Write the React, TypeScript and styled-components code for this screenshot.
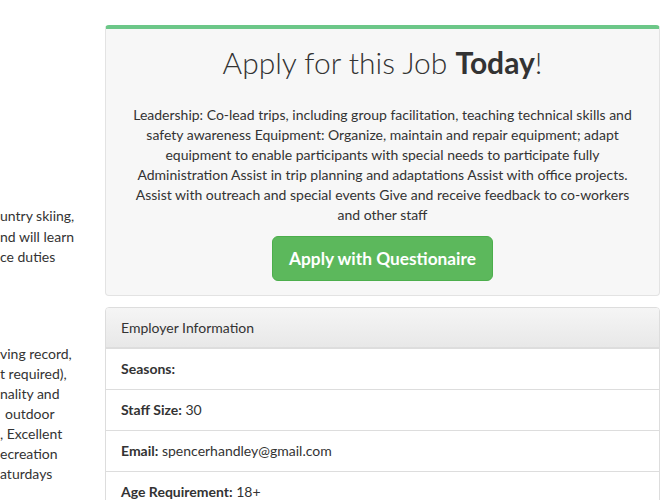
import React from "react";
import styled, { createGlobalStyle } from "styled-components";

const Global = createGlobalStyle`
  html, body { margin: 0; padding: 0; background: #fff; }
  body { font-family: Lato, "Open Sans", sans-serif; color: #333; font-size: 14px; line-height: 20px; }
`;

const Page = styled.div`
  display: flex;
  align-items: flex-start;
  width: 661px;
  height: 500px;
  overflow: hidden;
`;

const SideColumn = styled.div`
  width: 75px;
  flex: none;
  margin-right: 30px;
  overflow: hidden;
  padding-top: 206px;
`;

const SideBlock = styled.div<{ $gap?: number; $line?: number }>`
  margin-top: ${(p) => p.$gap ?? 0}px;
  display: flex;
  flex-direction: column;
  line-height: ${(p) => p.$line ?? 20}px;
`;

const SideLine = styled.div<{ $indent?: number }>`
  white-space: nowrap;
  padding-left: ${(p) => p.$indent ?? 0}px;
`;

const MainColumn = styled.div`
  width: 555px;
  flex: none;
  padding-top: 25px;
  display: flex;
  flex-direction: column;
  gap: 11px;
`;

const ApplyPanel = styled.section`
  background: #f7f7f7;
  border: 1px solid #e3e3e3;
  border-top: 4px solid #6cc788;
  border-radius: 4px;
  padding: 11px 19px 14px;
  text-align: center;
`;

const Title = styled.h1`
  margin: 0;
  font-size: 30px;
  line-height: 44px;
  font-weight: 300;
  color: #333;
  b { font-weight: 700; }
`;

const Body = styled.p`
  margin: 21px 0 11px;
  font-size: 14px;
  line-height: 20px;
`;

const ApplyButton = styled.button`
  font-family: inherit;
  font-size: 17.3px;
  font-weight: 700;
  color: #fff;
  background: #5cb85c;
  border: 1px solid #4cae4c;
  border-radius: 6px;
  height: 45px;
  padding: 0 16px;
  cursor: pointer;
`;

const InfoPanel = styled.section`
  border: 1px solid #ddd;
  border-radius: 4px;
  background: #fff;
`;

const InfoHeading = styled.div`
  background: linear-gradient(to bottom, #f5f5f5 0%, #e8e8e8 100%);
  border-bottom: 1px solid #ddd;
  border-radius: 3px 3px 0 0;
  padding: 10px 15px 9px;
  line-height: 20px;
`;

const InfoRow = styled.div`
  padding: 10px 15px;
  line-height: 20px;
  border-top: 1px solid #ddd;
  &:first-of-type { border-top: none; }
  b { font-weight: 700; }
`;

export default function App() {
  return (
    <>
      <Global />
      <Page>
        <SideColumn>
          <SideBlock $line={20.5}>
            <SideLine>untry skiing,</SideLine>
            <SideLine>nd will learn</SideLine>
            <SideLine>ce duties</SideLine>
          </SideBlock>
          <SideBlock $gap={76}>
            <SideLine>ving record,</SideLine>
            <SideLine>t required),</SideLine>
            <SideLine>nality and</SideLine>
            <SideLine $indent={5}>outdoor</SideLine>
            <SideLine>, Excellent</SideLine>
            <SideLine>ecreation</SideLine>
            <SideLine>aturdays</SideLine>
          </SideBlock>
        </SideColumn>
        <MainColumn>
          <ApplyPanel>
            <Title>
              Apply for this Job <b>Today</b>!
            </Title>
            <Body>
              Leadership: Co-lead trips, including group facilitation, teaching technical skills and
              <br />
              safety awareness Equipment: Organize, maintain and repair equipment; adapt
              <br />
              equipment to enable participants with special needs to participate fully
              <br />
              Administration Assist in trip planning and adaptations Assist with office projects.
              <br />
              Assist with outreach and special events Give and receive feedback to co-workers
              <br />
              and other staff
            </Body>
            <ApplyButton>Apply with Questionaire</ApplyButton>
          </ApplyPanel>
          <InfoPanel>
            <InfoHeading>Employer Information</InfoHeading>
            <InfoRow>
              <b>Seasons:</b>
            </InfoRow>
            <InfoRow>
              <b>Staff Size:</b> 30
            </InfoRow>
            <InfoRow>
              <b>Email:</b> spencerhandley@gmail.com
            </InfoRow>
            <InfoRow>
              <b>Age Requirement:</b> 18+
            </InfoRow>
          </InfoPanel>
        </MainColumn>
      </Page>
    </>
  );
}
